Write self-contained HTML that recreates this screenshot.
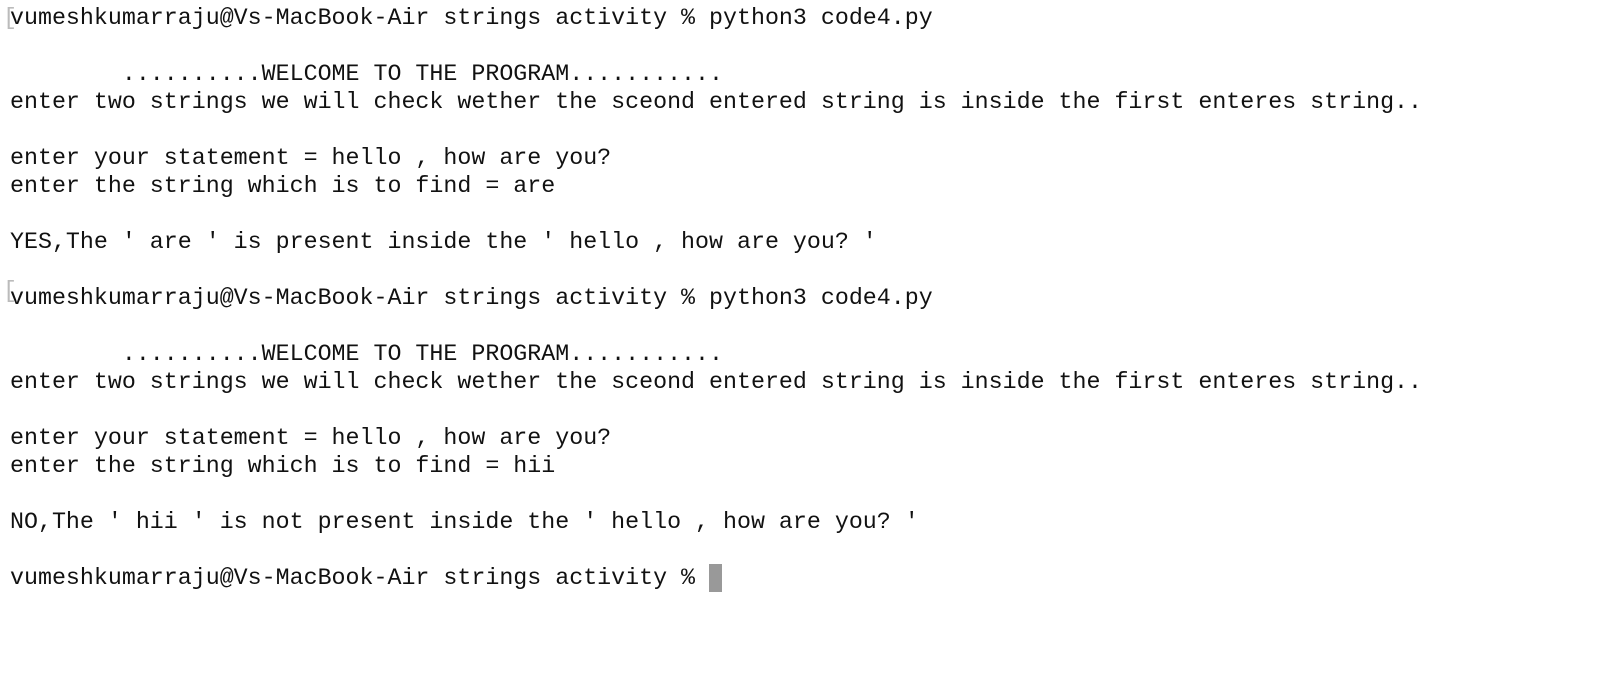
<!DOCTYPE html>
<html><head><meta charset="utf-8"><style>
html,body{margin:0;padding:0;background:#fff;width:1607px;height:698px;overflow:hidden}
pre{margin:0;position:absolute;left:10px;top:4px;font-family:"Liberation Mono",monospace;font-size:23.3px;line-height:28px;color:#111;letter-spacing:0}
.b{position:absolute;left:3px;color:#bbb;font-family:"Liberation Mono",monospace;font-size:23.3px;line-height:28px}
.cur{display:inline-block;width:13px;height:28px;background:#999;vertical-align:top}
</style></head><body>
<div class="b" style="top:4px">[</div>
<div class="b" style="top:277px">[</div>
<pre>vumeshkumarraju@Vs-MacBook-Air strings activity % python3 code4.py

        ..........WELCOME TO THE PROGRAM...........
enter two strings we will check wether the sceond entered string is inside the first enteres string..

enter your statement = hello , how are you?
enter the string which is to find = are

YES,The ' are ' is present inside the ' hello , how are you? '

vumeshkumarraju@Vs-MacBook-Air strings activity % python3 code4.py

        ..........WELCOME TO THE PROGRAM...........
enter two strings we will check wether the sceond entered string is inside the first enteres string..

enter your statement = hello , how are you?
enter the string which is to find = hii

NO,The ' hii ' is not present inside the ' hello , how are you? '

vumeshkumarraju@Vs-MacBook-Air strings activity % <span class="cur"></span></pre>
</body></html>
